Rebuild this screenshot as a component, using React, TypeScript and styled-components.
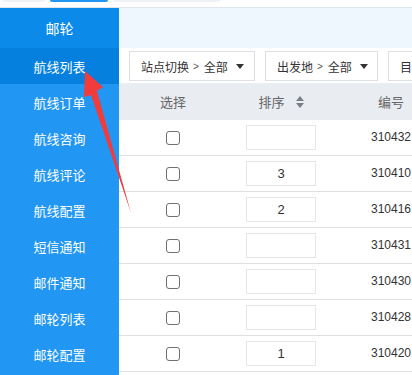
import React from "react";
import styled, { createGlobalStyle } from "styled-components";

const GlobalStyle = createGlobalStyle`
  html, body {
    margin: 0;
    padding: 0;
    background: #fff;
    overflow: hidden;
  }
  * {
    box-sizing: border-box;
  }
  body {
    font-family: "Liberation Sans", "Noto Sans CJK SC", sans-serif;
    font-size: 13px;
    color: #333;
  }
`;

const menu = [
  "航线列表",
  "航线订单",
  "航线咨询",
  "航线评论",
  "航线配置",
  "短信通知",
  "邮件通知",
  "邮轮列表",
  "邮轮配置",
];

const rows = [
  { sort: "", id: "310432" },
  { sort: "3", id: "310410" },
  { sort: "2", id: "310416" },
  { sort: "", id: "310431" },
  { sort: "", id: "310430" },
  { sort: "", id: "310428" },
  { sort: "1", id: "310420" },
];

export default function App() {
  return (
    <Page>
      <GlobalStyle />
      <TopStrip>
        <Tab $width={42} $left={3} />
        <Tab $width={58} $left={5} $active />
        <Tab $width={107} $left={5} />
      </TopStrip>
      <Body>
        <Sidebar>
          <SideHeader>邮轮</SideHeader>
          {menu.map((m, i) => (
            <SideItem key={m} $active={i === 0}>
              {m}
            </SideItem>
          ))}
        </Sidebar>
        <Main>
          <Banner />
          <FilterBar>
            <Dropdown $width={126}>
              站点切换<Gt>&gt;</Gt>全部
              <Caret />
            </Dropdown>
            <Dropdown $width={113}>
              出发地<Gt>&gt;</Gt>全部
              <Caret />
            </Dropdown>
            <Dropdown $width={110}>目的地</Dropdown>
          </FilterBar>
          <Table>
            <HeadRow>
              <Cell>选择</Cell>
              <Cell>
                排序
                <SortIcon width="8" height="12" viewBox="0 0 8 12">
                  <path d="M4 0 L8 5 L0 5 Z" fill="#7a7f86" />
                  <path d="M0 7 L8 7 L4 12 Z" fill="#7a7f86" />
                </SortIcon>
              </Cell>
              <Cell>编号</Cell>
            </HeadRow>
            {rows.map((r) => (
              <Row key={r.id}>
                <Cell>
                  <Check />
                </Cell>
                <Cell>
                  <SortInput>{r.sort}</SortInput>
                </Cell>
                <NumCell>{r.id}</NumCell>
              </Row>
            ))}
          </Table>
        </Main>
      </Body>
      <Arrow width="412" height="375" viewBox="0 0 412 375">
        <polygon
          points="85,71 103,87 97,91 131,213 91,95 84,97"
          fill="#f23b3b"
        />
      </Arrow>
    </Page>
  );
}

const Page = styled.div`
  position: relative;
  width: 412px;
  height: 375px;
  overflow: hidden;
`;

const TopStrip = styled.div`
  height: 8px;
  display: flex;
  align-items: flex-start;
  border-bottom: 1px solid #dde5ee;
  background: #fff;
`;

const Tab = styled.div<{ $width: number; $left: number; $active?: boolean }>`
  width: ${(p) => p.$width}px;
  margin-left: ${(p) => p.$left}px;
  height: 2px;
  border-radius: 0 0 3px 3px;
  background: ${(p) => (p.$active ? "#2196f3" : "#eef1f6")};
`;

const Body = styled.div`
  display: flex;
`;

const Sidebar = styled.div`
  width: 119px;
  flex-shrink: 0;
  background: #2196f3;
  height: 367px;
`;

const SideHeader = styled.div`
  height: 40px;
  background: #0b8ae9;
  color: #fff;
  font-size: 14px;
  display: flex;
  align-items: center;
  justify-content: center;
`;

const SideItem = styled.div<{ $active?: boolean }>`
  height: 36px;
  background: ${(p) => (p.$active ? "#0580df" : "#2196f3")};
  color: #fff;
  font-size: 13px;
  display: flex;
  align-items: center;
  justify-content: center;
`;

const Main = styled.div`
  flex: 1;
  min-width: 0;
  overflow: hidden;
`;

const Banner = styled.div`
  height: 40px;
  background: #eef6fe;
`;

const FilterBar = styled.div`
  height: 35px;
  display: flex;
  gap: 10px;
  padding: 3px 0 0 10px;
  background: #fff;
  white-space: nowrap;
`;

const Dropdown = styled.div<{ $width: number }>`
  width: ${(p) => p.$width}px;
  height: 30px;
  flex-shrink: 0;
  display: flex;
  align-items: center;
  padding: 0 0 0 11px;
  border: 1px solid #dcdfe3;
  background: #fff;
  color: #333;
  font-size: 12px;
`;

const Gt = styled.span`
  font-size: 10px;
  color: #555;
  margin: 0 5px 0 4px;
`;

const Caret = styled.span`
  margin-left: 8px;
  width: 0;
  height: 0;
  border-left: 4px solid transparent;
  border-right: 4px solid transparent;
  border-top: 5px solid #333;
`;

const Table = styled.div`
  width: 330px;
`;

const HeadRow = styled.div`
  display: grid;
  grid-template-columns: 108px 108px 112px;
  height: 37px;
  background: #e9ecf1;
  color: #666;
`;

const Row = styled.div`
  display: grid;
  grid-template-columns: 108px 108px 112px;
  height: 36px;
  border-bottom: 1px solid #dde1e4;
  background: #fff;
`;

const Cell = styled.div`
  display: flex;
  align-items: center;
  justify-content: center;
  gap: 11px;
  font-size: 13px;
`;

const NumCell = styled(Cell)`
  font-size: 12px;
  padding-bottom: 1px;
`;

const SortIcon = styled.svg`
  display: block;
`;

const Check = styled.span`
  width: 14px;
  height: 14px;
  border: 1px solid #707070;
  border-radius: 3px;
  background: #fff;
`;

const SortInput = styled.div`
  width: 70px;
  height: 25px;
  border: 1px solid #e6e6e6;
  display: flex;
  align-items: center;
  justify-content: center;
  color: #333;
  font-size: 13px;
`;

const Arrow = styled.svg`
  position: absolute;
  left: 0;
  top: 0;
  pointer-events: none;
`;
